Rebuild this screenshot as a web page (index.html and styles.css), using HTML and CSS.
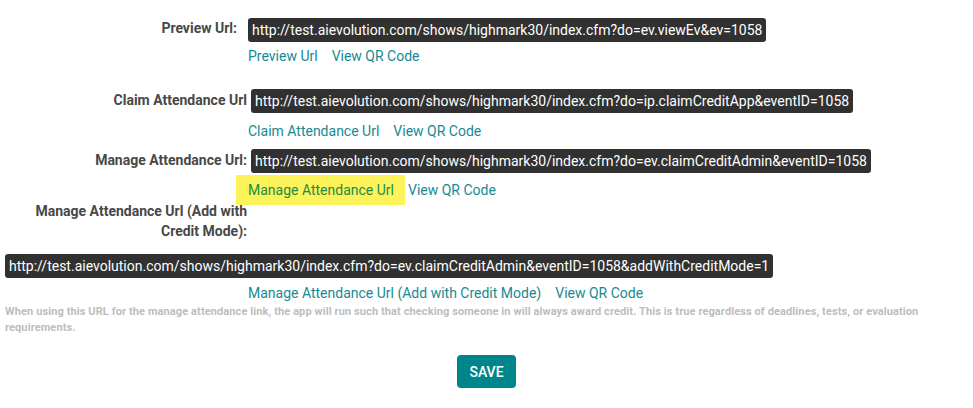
FILE: index.html
```html
<!DOCTYPE html>
<html lang="en">
<head>
<meta charset="utf-8">
<title>Event URLs</title>
<link rel="stylesheet" href="styles.css">
</head>
<body>
<div class="page">
  <div class="field field-first">
    <div class="label label-narrow">Preview Url:</div>
    <span class="code">http://test.aievolution.com/shows/highmark30/index.cfm?do=ev.viewEv&amp;ev=1058</span>
  </div>
  <div class="links links-first">
    <a class="link" href="#">Preview Url</a>
    <a class="link" href="#">View QR Code</a>
  </div>

  <div class="field field-second">
    <div class="label">Claim Attendance Url</div>
    <span class="code">http://test.aievolution.com/shows/highmark30/index.cfm?do=ip.claimCreditApp&amp;eventID=1058</span>
  </div>
  <div class="links links-second">
    <a class="link" href="#">Claim Attendance Url</a>
    <a class="link" href="#">View QR Code</a>
  </div>

  <div class="field field-third">
    <div class="label">Manage Attendance Url:</div>
    <span class="code">http://test.aievolution.com/shows/highmark30/index.cfm?do=ev.claimCreditAdmin&amp;eventID=1058</span>
  </div>
  <div class="links links-third">
    <a class="link link-highlight" href="#">Manage Attendance Url</a>
    <a class="link" href="#">View QR Code</a>
  </div>

  <div class="field field-fourth">
    <div class="label">Manage Attendance Url (Add with Credit Mode):</div>
    <span class="code code-wrapped">http://test.aievolution.com/shows/highmark30/index.cfm?do=ev.claimCreditAdmin&amp;eventID=1058&amp;addWithCreditMode=1</span>
  </div>
  <div class="links links-fourth">
    <a class="link" href="#">Manage Attendance Url (Add with Credit Mode)</a>
    <a class="link" href="#">View QR Code</a>
  </div>
  <p class="help">When using this URL for the manage attendance link, the app will run such that checking someone in will always award credit. This is true regardless of deadlines, tests, or evaluation requirements.</p>

  <div class="actions">
    <button class="btn-save" type="button">SAVE</button>
  </div>
</div>
</body>
</html>
```

FILE: styles.css
```css
* { box-sizing: border-box; }

html, body {
  margin: 0;
  padding: 0;
  background: #ffffff;
}

body {
  font-family: Roboto, "Liberation Sans", Arial, sans-serif;
  font-size: 14px;
  line-height: 20px;
  color: #484848;
}

.page {
  padding: 18px 5px 0 5px;
}

.field {
  display: flex;
  flex-wrap: wrap;
  align-items: flex-start;
}

.field-second { margin-top: 23px; }
.field-third { margin-top: 8px; }
.field-fourth { margin-top: 1px; }

.label {
  width: 246px;
  padding: 1px 4px 0 0;
  text-align: right;
  font-weight: bold;
  color: #484848;
}

.label-narrow {
  width: 243px;
  padding-right: 11px;
  padding-top: 0;
}

.field-fourth .label {
  padding-top: 0;
}

.code {
  display: inline-block;
  background: #313131;
  color: #ffffff;
  padding: 2px 4px;
  border-radius: 3px;
  line-height: 20px;
  white-space: nowrap;
}

.code-wrapped {
  margin-top: 13px;
}

.links {
  display: flex;
  gap: 14px;
  padding-left: 243px;
}

.links-first { margin-top: 4px; }
.links-second { margin-top: 8px; }
.links-third { margin-top: 7px; }
.links-fourth { margin-top: 5px; }

.link {
  color: #168a94;
  text-decoration: none;
}

.link-highlight {
  background: #fcf25a;
  color: #1f8a45;
  padding: 5px 11px 5px 12px;
  margin: -5px -11px -5px -12px;
}

.help {
  margin: 1px 0 0 0;
  font-size: 11px;
  line-height: 16px;
  font-weight: bold;
  letter-spacing: 0.1px;
  color: #bdbdbd;
}

.actions {
  text-align: center;
  margin-top: 19px;
}

.btn-save {
  font-family: Roboto, "Liberation Sans", Arial, sans-serif;
  font-size: 14px;
  line-height: 20px;
  font-weight: 500;
  color: #ffffff;
  background: #00868a;
  border: none;
  border-radius: 4px;
  width: 59px;
  height: 33px;
  padding: 0;
  cursor: pointer;
}
```
